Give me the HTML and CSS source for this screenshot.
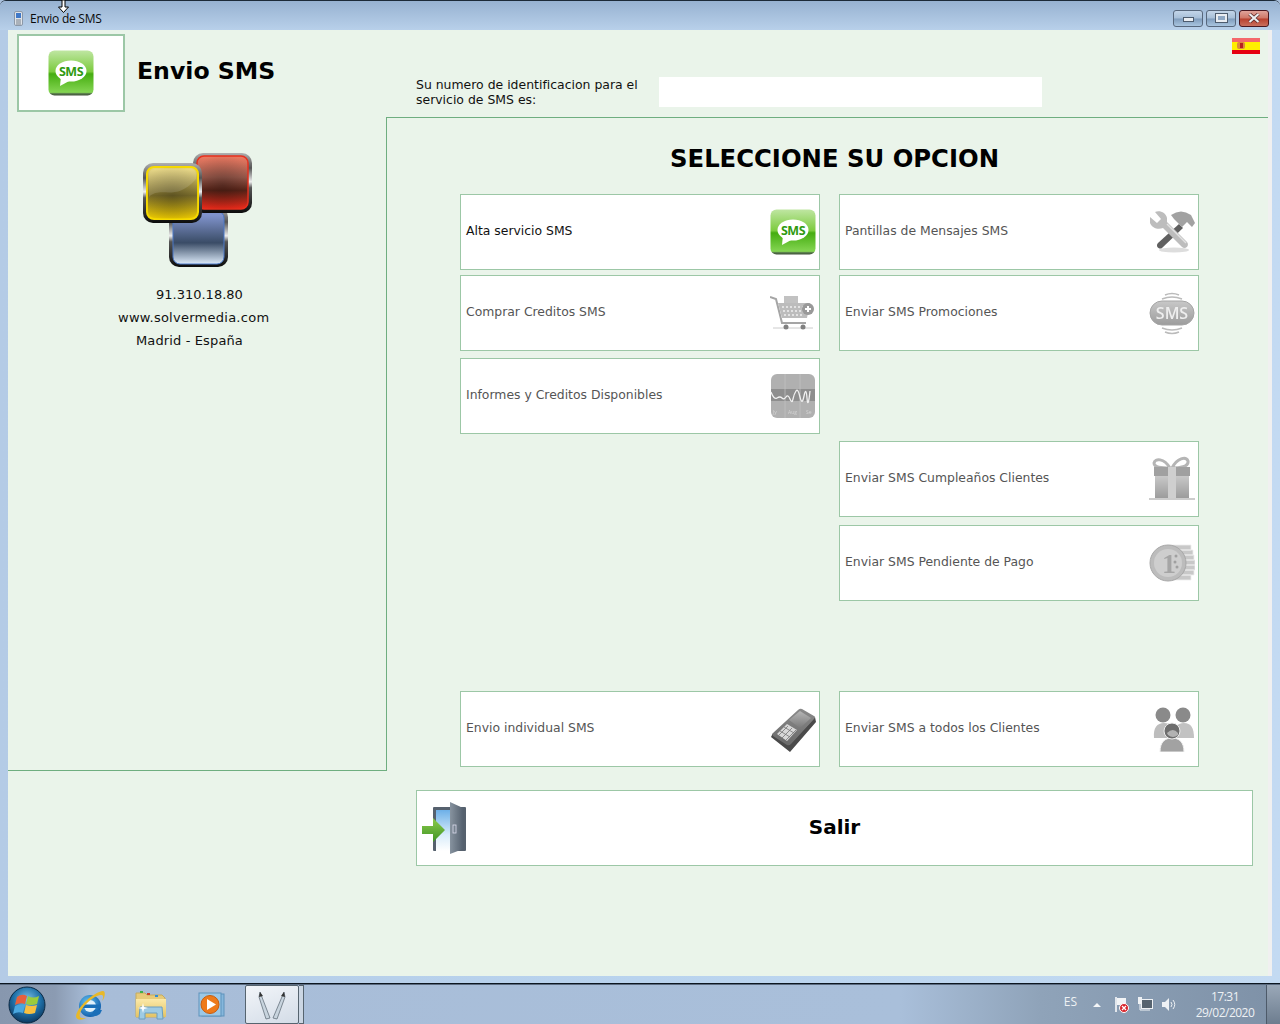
FILE: index.html
```html
<!DOCTYPE html>
<html lang="es">
<head>
<meta charset="utf-8">
<title>Envio de SMS</title>
<link rel="stylesheet" href="styles.css">
</head>
<body>
<svg class="defs" width="0" height="0" aria-hidden="true">
  <defs>
    <linearGradient id="gSms" x1="0" y1="0" x2="0" y2="1">
      <stop offset="0" stop-color="#bfe6a2"/><stop offset=".47" stop-color="#7ccb3e"/><stop offset=".52" stop-color="#45ad10"/><stop offset=".93" stop-color="#84d552"/><stop offset=".96" stop-color="#55744a"/><stop offset="1" stop-color="#3f4f38"/>
    </linearGradient>
    <linearGradient id="gGray" x1="0" y1="0" x2="0" y2="1">
      <stop offset="0" stop-color="#c8c8c8"/><stop offset="1" stop-color="#9c9c9c"/>
    </linearGradient>
    <linearGradient id="gScreen" x1="0" y1="0" x2="0" y2="1">
      <stop offset="0" stop-color="#b5b5b5"/><stop offset="1" stop-color="#7a7a7a"/>
    </linearGradient>
    <linearGradient id="gDark" x1="0" y1="0" x2="0" y2="1">
      <stop offset="0" stop-color="#8a8a8a"/><stop offset="1" stop-color="#6a6a6a"/>
    </linearGradient>
    <linearGradient id="gMetal" x1="0" y1="0" x2="0" y2="1">
      <stop offset="0" stop-color="#b0b0b0"/><stop offset=".25" stop-color="#555"/><stop offset=".48" stop-color="#eee"/><stop offset=".58" stop-color="#555"/><stop offset="1" stop-color="#0c0c0c"/>
    </linearGradient>
    <linearGradient id="gY" x1="0" y1="0" x2="0" y2="1">
      <stop offset="0" stop-color="#ecd97c"/><stop offset=".55" stop-color="#7d6f2c"/><stop offset="1" stop-color="#f0cc00"/>
    </linearGradient>
    <linearGradient id="gR" x1="0" y1="0" x2="0" y2="1">
      <stop offset="0" stop-color="#ee7a62"/><stop offset=".4" stop-color="#9a5a4c"/><stop offset=".65" stop-color="#5a2418"/><stop offset="1" stop-color="#f02a1a"/>
    </linearGradient>
    <linearGradient id="gB" x1="0" y1="0" x2="0" y2="1">
      <stop offset=".08" stop-color="#8093cc"/><stop offset=".6" stop-color="#3a4c66"/><stop offset="1" stop-color="#dceaf9"/>
    </linearGradient>
    <radialGradient id="gShade" cx=".5" cy=".55" r=".6">
      <stop offset="0" stop-color="#000" stop-opacity=".25"/><stop offset="1" stop-color="#000" stop-opacity="0"/>
    </radialGradient>
    <linearGradient id="gArrow" x1="0" y1="0" x2="0" y2="1">
      <stop offset="0" stop-color="#8ccb4c"/><stop offset="1" stop-color="#3f9424"/>
    </linearGradient>
    <linearGradient id="gDoor" x1="0" y1="0" x2="1" y2="0">
      <stop offset="0" stop-color="#87939f"/><stop offset="1" stop-color="#55616f"/>
    </linearGradient>
    <linearGradient id="gSky" x1="0" y1="0" x2="0" y2="1">
      <stop offset="0" stop-color="#6db0e8"/><stop offset=".6" stop-color="#d8ecfa"/><stop offset="1" stop-color="#fff"/>
    </linearGradient>
    <linearGradient id="gFolder" x1="0" y1="0" x2="0" y2="1">
      <stop offset="0" stop-color="#fbe9a8"/><stop offset="1" stop-color="#e3c365"/>
    </linearGradient>
    <radialGradient id="gOrb" cx=".5" cy=".35" r=".7">
      <stop offset="0" stop-color="#7fc1e6"/><stop offset=".55" stop-color="#1d6ea6"/><stop offset="1" stop-color="#0b2f52"/>
    </radialGradient>
    <radialGradient id="gIe" cx=".4" cy=".35" r=".7">
      <stop offset="0" stop-color="#69c5f2"/><stop offset="1" stop-color="#0a58a8"/>
    </radialGradient>
    <symbol id="icoSms" viewBox="0 0 46 46">
      <rect x="0.500" y="0.500" width="45" height="45" rx="6" fill="url(#gSms)"/>
      <ellipse cx="23" cy="21" rx="15.500" ry="10.500" fill="#fff"/>
      <path d="M13 26 L12 36 L23 30 Z" fill="#fff"/>
      <text x="23" y="25.500" class="sms-mark">SMS</text>
    </symbol>
  </defs>
</svg>

<div class="window">
  <header class="titlebar">
    <svg class="app-ico" width="12" height="16" viewBox="0 0 12 16"><rect x="1.500" y="0.500" width="8" height="14" rx="1.500" fill="#dfe3e8" stroke="#8b98a8"/><rect x="3" y="2" width="5" height="5" fill="#3f78c8"/><path d="M3 9h5M3 11h5M3 13h5" stroke="#77808c"/></svg>
    <span class="title-text">Envio de SMS</span>
    <svg class="cursor" width="11" height="13" viewBox="0 0 11 13"><path d="M4 0h3v7h3.500L5.500 12.500.5 7H4z" fill="#fff" stroke="#000"/></svg>
    <div class="win-buttons">
      <span class="wbtn"><i class="glyph-min"></i></span>
      <span class="wbtn"><i class="glyph-max"></i></span>
      <span class="wbtn wbtn-close">
        <svg width="14" height="10" viewBox="0 0 14 10"><path d="M2.500 1l9 8M11.500 1l-9 8" stroke="#5a2a2a" stroke-width="3.600"/><path d="M2.500 1l9 8M11.500 1l-9 8" stroke="#eceff2" stroke-width="2.200"/></svg>
      </span>
    </div>
  </header>

  <div class="frame">
    <main class="client">
      <section class="top">
        <div class="brand-box">
          <svg class="ico" width="46" height="46"><use href="#icoSms"/></svg>
        </div>
        <h1 class="brand-title">Envio SMS</h1>
        <p class="id-label">Su numero de identificacion para el<br>servicio de SMS es:</p>
        <div class="id-input"></div>
        <svg class="flag" width="28" height="16" viewBox="0 0 28 16"><rect width="28" height="16" fill="#ffee00"/><rect width="28" height="4" fill="#f4686c"/><rect y="12" width="28" height="4" fill="#e60012"/><rect x="5" y="4" width="8" height="7" rx="2" fill="#dc8a3c"/><rect x="8" y="5" width="3" height="5" fill="#b82020"/></svg>
      </section>

      <section class="body">
        <aside class="side">
          <svg class="cubes" width="110" height="116" viewBox="0 0 110 116">
            <g>
              <rect x="26" y="54" width="59" height="60" rx="10" fill="url(#gMetal)"/>
              <rect x="30" y="58" width="51" height="53" rx="7" fill="url(#gB)" stroke="#4a78c8"/>
            </g>
            <g>
              <rect x="50" y="0" width="59" height="60" rx="10" fill="url(#gMetal)"/>
              <rect x="54" y="3" width="51" height="53" rx="7" fill="url(#gR)" stroke="#e8301e" stroke-width="1.500"/>
              <rect x="54" y="3" width="51" height="53" rx="7" fill="url(#gShade)"/>
            </g>
            <g>
              <rect x="0" y="10" width="59" height="60" rx="10" fill="url(#gMetal)"/>
              <rect x="4" y="14" width="51" height="52" rx="7" fill="url(#gY)" stroke="#f7da00" stroke-width="2"/>
              <rect x="4" y="14" width="51" height="52" rx="7" fill="url(#gShade)"/>
              <path d="M6 44 C18 32 32 50 53 26 V21 Q53 16 47 16 H12 Q6 16 6 22Z" fill="#fff" opacity=".13"/>
            </g>
          </svg>
          <p class="contact contact-phone">91.310.18.80</p>
          <p class="contact contact-web">www.solvermedia.com</p>
          <p class="contact contact-city">Madrid - España</p>
        </aside>

        <div class="panel">
          <h2 class="panel-title">SELECCIONE SU OPCION</h2>
          <div class="options">
            <button class="card card-active r1 c1"><span class="card-text">Alta servicio SMS</span>
              <svg class="ico" width="46" height="46"><use href="#icoSms"/></svg></button>

            <button class="card r1 c2"><span class="card-text">Pantillas de Mensajes SMS</span>
              <svg class="ico soft" width="46" height="46" viewBox="0 0 46 46">
                <ellipse cx="25" cy="41" rx="15" ry="2.500" fill="#ddd"/>
                <path d="M30 15L9 34c-3 3 1 7 4 5l21-20z" fill="#5f5f5f"/>
                <path d="M22 6q10-7 20 0l4 8-3 4-5-5-5 5-8-8z" fill="#a2a2a2"/>
                <path d="M1 8l7 6 4-4-6-7c5-2 11 1 12 6l0 4 20 20c3 4-2 8-5 5L14 19c-5 2-11 0-13-5z" fill="#bdbdbd"/>
                <path d="M18 15l19 19" stroke="#e2e2e2" stroke-width="1.500"/>
              </svg></button>

            <button class="card r2 c1"><span class="card-text">Comprar Creditos SMS</span>
              <svg class="ico soft" width="46" height="46" viewBox="0 0 46 46">
                <path d="M0 7l6 2 6 24h24" fill="none" stroke="#a5a5a5" stroke-width="2"/>
                <rect x="14" y="6" width="14" height="8" fill="#c2c2c2"/>
                <path d="M8 13h32l-3 15H12z" fill="#bcbcbc"/>
                <path d="M12 17h24M13 21h22M14 25h20" stroke="#eee" stroke-width="1.500" stroke-dasharray="2 2"/>
                <circle cx="38" cy="19" r="6" fill="#999"/>
                <path d="M35 19h6M38 16v6" stroke="#fff" stroke-width="2"/>
                <path d="M3 38h40" stroke="#ccc"/>
                <circle cx="16" cy="37" r="2.500" fill="#808080"/><circle cx="33" cy="37" r="2.500" fill="#808080"/>
              </svg></button>

            <button class="card r2 c2"><span class="card-text">Enviar SMS Promociones</span>
              <svg class="ico soft" width="46" height="46" viewBox="0 0 46 46">
                <rect x="1" y="11" width="44" height="24" rx="12" fill="url(#gGray)" stroke="#a5a5a5"/>
                <text x="23" y="29" class="sms-gray">SMS</text>
                <path d="M16 5q7-3 14 0M13 9q10-4 20 0M13 38q10 4 20 0M16 42q7 3 14 0" fill="none" stroke="#bbb" stroke-width="1.500"/>
              </svg></button>

            <button class="card r3 c1"><span class="card-text">Informes y Creditos Disponibles</span>
              <svg class="ico soft" width="46" height="46" viewBox="0 0 46 46">
                <rect x="1" y="1" width="44" height="44" rx="6" fill="#b0b0b0"/>
                <path d="M1 16h44v12H1z" fill="#8e8e8e"/>
                <path d="M15 1v44M30 1v44" stroke="#c4c4c4" stroke-width=".7"/>
                <path d="M1 19q3 8 6 6t5 0 4-1 4 2 3 0 3-8 4 6 4-1 3 2 3-7" fill="none" stroke="#f0f0f0" stroke-width="1.300"/>
                <text x="3" y="41" class="chart-label">Jy</text><text x="18" y="41" class="chart-label">Aug</text><text x="36" y="41" class="chart-label">Se</text>
              </svg></button>

            <button class="card r4 c2"><span class="card-text">Enviar SMS Cumpleaños Clientes</span>
              <svg class="ico soft" width="46" height="46" viewBox="0 0 46 46">
                <path d="M21 12C15 2 6 2 5 7c0 5 9 5 16 5zM23 12c5-10 14-12 16-7 1 6-9 7-16 7z" fill="none" stroke="#b5b5b5" stroke-width="3"/>
                <rect x="5" y="11" width="36" height="9" fill="#a0a0a0"/>
                <rect x="6" y="20" width="34" height="22" fill="url(#gGray)"/>
                <rect x="19" y="11" width="8" height="31" fill="#cfcfcf"/>
                <path d="M0 43h46" stroke="#ccc" stroke-width="2"/>
              </svg></button>

            <button class="card r5 c2"><span class="card-text">Enviar SMS Pendiente de Pago</span>
              <svg class="ico soft" width="46" height="46" viewBox="0 0 46 46">
                <path d="M20 5h22v5H20zM28 10h16v5H28zM30 15h15v5H30zM32 20h14v5H32zM32 25h14v5H32zM30 30h15v5H30zM25 35h17v5H25z" fill="#c8c8c8" stroke="#eee" stroke-width=".8"/>
                <circle cx="19" cy="23" r="18" fill="#bcbcbc" stroke="#a8a8a8"/>
                <circle cx="19" cy="23" r="14" fill="#cecece"/>
                <text x="13" y="33" class="coin-mark">1</text>
                <circle cx="26" cy="22" r="1.500" fill="#a0a0a0"/><circle cx="28" cy="27" r="1.500" fill="#a0a0a0"/><circle cx="27" cy="16" r="1.500" fill="#a0a0a0"/>
              </svg></button>

            <button class="card r6 c1"><span class="card-text">Envio individual SMS</span>
              <svg class="ico soft" width="46" height="46" viewBox="0 0 46 46">
                <path d="M1 31L20 46l26-30-1-5L19 39 3 27z" fill="#4a4a4a"/>
                <path d="M3 27L28 4q2-2 4-1l12 7q2 1 0 3L21 38q-2 2-4 1L3 30q-1-2 0-3z" fill="url(#gDark)"/>
                <path d="M19 14L30 5l11 7-11 10z" fill="url(#gScreen)"/>
                <path d="M7 28l10-10 10 6-10 11z" fill="#d8d8d8"/>
                <path d="M10 25l10 6M14 21l10 6M12 32l10-10M16 34l10-10M9 29l9-9" stroke="#777" stroke-width=".8"/>
              </svg></button>

            <button class="card r6 c2"><span class="card-text">Enviar SMS a todos los Clientes</span>
              <svg class="ico soft" width="46" height="46" viewBox="0 0 46 46">
                <path d="M5 32c-1-10 3-15 10-15s9 4 10 15z" fill="#bdbdbd"/>
                <path d="M24 32c0-10 4-15 11-15s10 5 10 15z" fill="#c2c2c2"/>
                <circle cx="14" cy="9" r="7.500" fill="#8a8a8a"/><circle cx="34" cy="9" r="7.500" fill="#8a8a8a"/>
                <path d="M11 46c0-10 5-14 12-14s12 4 12 14z" fill="#a2a2a2" stroke="#eee"/>
                <circle cx="23" cy="25" r="8" fill="#6d6d6d" stroke="#eee"/>
                <path d="M18 27q6-6 11 0v2q-5 4-10 0z" fill="#b2b2b2"/>
              </svg></button>
          </div>

          <button class="exit">
            <svg class="door soft" width="46" height="52" viewBox="0 0 46 52">
              <rect x="11" y="5" width="33" height="44" rx="1" fill="#56616e"/>
              <rect x="14" y="8" width="17" height="41" fill="url(#gSky)"/>
              <path d="M28 0l13 6v41l-13 5z" fill="url(#gDoor)"/>
              <rect x="31" y="23" width="3" height="8" fill="none" stroke="#dde" stroke-width=".8"/>
              <path d="M0 24h11v-8l12 12-12 12v-8H0z" fill="url(#gArrow)"/>
            </svg>
            <span class="exit-text">Salir</span>
          </button>
        </div>
      </section>
    </main>
    <div class="frame-strip"></div>
  </div>
</div>

<footer class="taskbar">
  <svg class="orb" width="38" height="38" viewBox="0 0 38 38">
    <circle cx="19" cy="19" r="18" fill="url(#gOrb)" stroke="#0c2a44"/>
    <path d="M9 11q5-4 10-1l-2 8q-5-2-10 1z" fill="#e8603c"/>
    <path d="M20 10q5 3 11 0l-2 8q-6 2-11 0z" fill="#9ccc3c"/>
    <path d="M7 20q5-3 10-1l-2 8q-5-2-10 1z" fill="#4aa8e0"/>
    <path d="M18 19q5 2 11 0l-2 8q-6 2-11 0z" fill="#f8c040"/>
  </svg>
  <svg class="tb-ico tb-ie" width="32" height="34" viewBox="0 0 32 34">
    <circle cx="16" cy="18" r="11" fill="url(#gIe)"/>
    <circle cx="16" cy="18" r="6" fill="#dff1fb"/>
    <rect x="8" y="16.500" width="18" height="3.500" fill="#1a6fb8"/>
    <path d="M20 22h8l-2 4q-4 3-9 2z" fill="#1a6fb8"/>
    <path d="M29 3C20 4 4 18 2 28c0 5 7 4 10 2C5 31 4 28 8 21 14 12 24 6 28 7c2 1 1 4 0 6 3-3 4-10 1-10z" fill="#e8b828"/>
  </svg>
  <svg class="tb-ico tb-folder" width="32" height="32" viewBox="0 0 32 32">
    <path d="M1 4h9l2 2h15l3 3v19H1z" fill="#e6cb7a" stroke="#c5ab5f"/>
    <rect x="5" y="2" width="3" height="2" fill="#3cb04a"/><rect x="12" y="4" width="3" height="2" fill="#c8402c"/><rect x="20" y="6" width="3" height="2" fill="#2f8ed8"/>
    <rect x="1" y="10" width="30" height="18" fill="url(#gFolder)"/>
    <path d="M5 18h22l1 12h-6v-6H10v6H4z" fill="#9ecbe4" stroke="#6a9ec0"/>
    <path d="M8 14l1 4 4 1-4 1-1 4-1-4-4-1 4-1z" fill="#fff"/>
  </svg>
  <svg class="tb-ico tb-media" width="30" height="28" viewBox="0 0 30 28">
    <rect x="6" y="3" width="22" height="22" fill="#86b7dc" stroke="#5e93bb"/>
    <rect x="3" y="2" width="22" height="23" fill="#9cc8e6" stroke="#5e93bb"/>
    <circle cx="14" cy="13.500" r="9" fill="#ee7a1a" stroke="#c95c0c"/>
    <path d="M11 8l9 5.500-9 5.500z" fill="#fff"/>
  </svg>
  <div class="tb-active">
    <svg width="30" height="32" viewBox="0 0 30 32">
      <path d="M3 3l-1 5 7 22 4-1z" fill="#c8d4de" stroke="#56636e" stroke-width=".7"/>
      <path d="M27 3l1 5-8 22-4-1z" fill="#c8d4de" stroke="#56636e" stroke-width=".7"/>
      <path d="M3 3l-1 5 4-1zM27 3l1 5-4-1z" fill="#333"/>
    </svg>
  </div>
  <span class="tb-sliver"></span>
  <div class="tray">
    <span class="tray-lang">ES</span>
    <span class="tray-arrow"></span>
    <svg class="tray-ico" width="17" height="17" viewBox="0 0 17 17"><path d="M3 1v15" stroke="#fff" stroke-width="1.500"/><path d="M4 2h9v7H4z" fill="#f2f4f6"/><circle cx="11" cy="12" r="4.500" fill="#d8232a" stroke="#fff"/><path d="M9 10l4 4M13 10l-4 4" stroke="#fff" stroke-width="1.300"/></svg>
    <svg class="tray-ico" width="17" height="17" viewBox="0 0 17 17"><rect x="4.500" y="3.500" width="11" height="9" fill="#56636f" stroke="#eef1f4"/><rect x="1" y="1" width="4" height="7" fill="#eef1f4"/><path d="M3 8v6h10" stroke="#eef1f4" fill="none"/></svg>
    <svg class="tray-ico" width="17" height="17" viewBox="0 0 17 17"><path d="M1 6h3l4-4v13l-4-4H1z" fill="#eef1f4"/><path d="M10 6q2 2.500 0 5M12 4q3.500 4.500 0 9" fill="none" stroke="#eef1f4"/></svg>
    <div class="clock"><span>17:31</span><span>29/02/2020</span></div>
  </div>
  <span class="show-desktop"></span>
</footer>
</body>
</html>
```

FILE: styles.css
```css
* { box-sizing: border-box; }
html, body { margin: 0; padding: 0; }
body {
  width: 1280px;
  height: 1024px;
  overflow: hidden;
  display: flex;
  flex-direction: column;
  font-family: "DejaVu Sans", Verdana, sans-serif;
  background: #a9c0dc;
}
.defs { position: absolute; }
p, h1, h2 { margin: 0; }

/* window chrome */
.window {
  height: 984px;
  display: flex;
  flex-direction: column;
  background: linear-gradient(90deg, #b4cbe6, #b9d3ee 50%, #c3daf2);
  border-top: 1px solid #1c2a38;
  border-bottom: 1px solid #0c1620;
  border-radius: 6px 6px 0 0;
}
.titlebar {
  position: relative;
  height: 29px;
  flex: none;
  display: flex;
  align-items: center;
  padding: 6px 11px 0 13px;
  background: linear-gradient(180deg, #97b2d1, #b8d0ea);
  border-radius: 6px 6px 0 0;
}
.app-ico { flex: none; }
.title-text {
  margin-left: 5px;
  font: 12px "Open Sans", "Noto Sans", sans-serif;
  letter-spacing: -0.25px;
  color: #0a0a0a;
}
.cursor { position: absolute; left: 58px; top: -1px; }
.win-buttons {
  margin-left: auto;
  display: flex;
  gap: 3px;
  margin-top: -1px;
}
.wbtn {
  width: 30px;
  height: 17px;
  display: flex;
  align-items: center;
  justify-content: center;
  border: 1px solid #57677c;
  border-radius: 3px;
  background: linear-gradient(180deg, #c3d5e9 0, #a7bfd8 48%, #7f9cbc 52%, #a9c5df 100%);
}
.wbtn-close {
  border-color: #4a1820;
  background: linear-gradient(180deg, #e0a39a 0, #cf7666 48%, #b8402e 52%, #c9705e 100%);
}
.glyph-min { width: 11px; height: 5px; margin-top: 3px; background: #e9edf2; border: 1px solid #4d5c6e; }
.glyph-max { width: 11px; height: 8px; background: #8fa8c4; border: 2px solid #e9edf2; outline: 1px solid #4d5c6e; }

.frame {
  flex: 1;
  display: flex;
  padding: 0 8px 7px 8px;
}
.client {
  width: 1260px;
  display: flex;
  flex-direction: column;
  background: #eaf4ea;
}
.frame-strip { width: 4px; background: #f0f0f0; }

/* header */
.top {
  position: relative;
  height: 87px;
  flex: none;
  display: flex;
  align-items: flex-start;
}
.brand-box {
  width: 108px;
  height: 78px;
  margin: 4px 0 0 9px;
  display: flex;
  align-items: center;
  justify-content: center;
  background: #fff;
  border: 2px solid #9cc7a6;
  flex: none;
}
.brand-title {
  margin: 24px 0 0 12px;
  width: 279px;
  font-size: 23.600px;
  line-height: 34px;
  font-weight: 700;
  color: #000;
  flex: none;
}
.id-label {
  margin-top: 47px;
  width: 243px;
  font-size: 12.440px;
  line-height: 15px;
  color: #111;
  flex: none;
}
.id-input {
  margin-top: 47px;
  width: 383px;
  height: 30px;
  background: #fff;
  flex: none;
}
.flag { margin: 8px 0 0 190px; flex: none; }

/* body */
.body { flex: 1; display: flex; align-items: flex-start; }
.side {
  width: 379px;
  height: 654px;
  flex: none;
  border-right: 1px solid #6fae80;
  border-bottom: 1px solid #6fae80;
  padding-top: 36px;
}
.cubes { display: block; margin: 0 0 14px 135px; }
.contact { font-size: 13px; line-height: 23px; color: #111; }
.contact-phone { margin-left: 148px; }
.contact-web { margin-left: 110px; letter-spacing: .26px; }
.contact-city { margin-left: 128px; letter-spacing: .13px; }

.panel {
  flex: 1;
  height: 859px;
  border-top: 1px solid #6fae80;
  padding-left: 29px;
}
.panel-title {
  width: 837px;
  margin-top: 24px;
  text-align: center;
  font-size: 24.300px;
  line-height: 34px;
  font-weight: 700;
  color: #000;
}
.options {
  margin: 18px 0 0 44px;
  display: grid;
  grid-template-columns: 360px 360px;
  grid-template-rows: repeat(6, 76px);
  column-gap: 19px;
}
.card {
  display: flex;
  align-items: center;
  justify-content: space-between;
  padding: 0 3px 0 5px;
  height: 76px;
  background: #fff;
  border: 1px solid #9cc7a6;
  font: 12.400px "DejaVu Sans", Verdana, sans-serif;
  color: #555;
  text-align: left;
}
.card-active { color: #111; }
.card-text { padding-bottom: 4px; }
.ico { flex: none; display: block; }
.soft { filter: blur(.45px); }
.c1 { grid-column: 1; }
.c2 { grid-column: 2; }
.r1 { grid-row: 1; }
.r2 { grid-row: 2; margin-top: 5px; }
.r3 { grid-row: 3; margin-top: 12px; }
.r4 { grid-row: 4; margin-top: 19px; }
.r5 { grid-row: 5; margin-top: 27px; }
.r6 { grid-row: 6; margin-top: 117px; }

.exit {
  margin-top: 140px;
  width: 837px;
  height: 76px;
  display: grid;
  grid-template-columns: 1fr auto 1fr;
  align-items: center;
  padding: 0 5px;
  background: #fff;
  border: 1px solid #9cc7a6;
}
.door { grid-column: 1; justify-self: start; }
.exit-text {
  grid-column: 2;
  padding-bottom: 2px;
  font: 700 20px "DejaVu Sans", Verdana, sans-serif;
  color: #000;
}
.sms-mark {
  font: 700 12.500px "Open Sans", sans-serif;
  letter-spacing: -0.5px;
  text-anchor: middle;
  fill: #2f9a10;
}
.sms-gray {
  font: 600 16px "Open Sans", sans-serif;
  text-anchor: middle;
  fill: #eee;
}
.chart-label { font: 5px "Open Sans", sans-serif; fill: #d4d4d4; }
.coin-mark { font: 700 28px "Liberation Serif", serif; fill: #a5a5a5; }

/* taskbar */
.taskbar {
  height: 40px;
  flex: none;
  display: flex;
  align-items: center;
  background: linear-gradient(90deg, #8797ae 0, #8b9bb2 55px, #a8bdd8 90px, #a9bfda 900px, #8fa3b9 1040px, #7e91a7 1280px);
  border-top: 1px solid #5b6b80;
}
.orb { margin-left: 8px; flex: none; }
.tb-ico { flex: none; }
.tb-ie { margin-left: 28px; }
.tb-folder { margin-left: 29px; }
.tb-media { margin-left: 29px; }
.tb-active {
  margin-left: 19px;
  width: 54px;
  height: 39px;
  flex: none;
  display: flex;
  align-items: center;
  justify-content: center;
  background: linear-gradient(160deg, #f2f5f9, #d3dce7);
  border: 1px solid #56646f;
  border-radius: 2px;
}
.tb-sliver {
  width: 5px;
  height: 39px;
  flex: none;
  background: #cbd6e3;
  border: 1px solid #56646f;
  border-left: 0;
}
.tray {
  margin-left: auto;
  display: flex;
  align-items: center;
}
.tray-lang { font: 12px "Open Sans", sans-serif; color: #eef1f4; margin-right: 16px; padding-bottom: 6px; }
.tray-arrow {
  width: 0;
  height: 0;
  border-left: 4px solid transparent;
  border-right: 4px solid transparent;
  border-bottom: 4px solid #f4f6f8;
  margin-right: 12px;
}
.tray-ico { margin-right: 7px; flex: none; }
.clock {
  width: 66px;
  margin: 0 8px 0 7px;
  display: flex;
  flex-direction: column;
  align-items: center;
  font: 12px/16px "Open Sans", sans-serif;
  letter-spacing: -0.5px;
  color: #eef1f4;
}
.show-desktop {
  width: 14px;
  height: 39px;
  flex: none;
  background: linear-gradient(180deg, #9aa8b8, #6d7d8f);
  border-left: 1px solid #4d5a69;
}
```
